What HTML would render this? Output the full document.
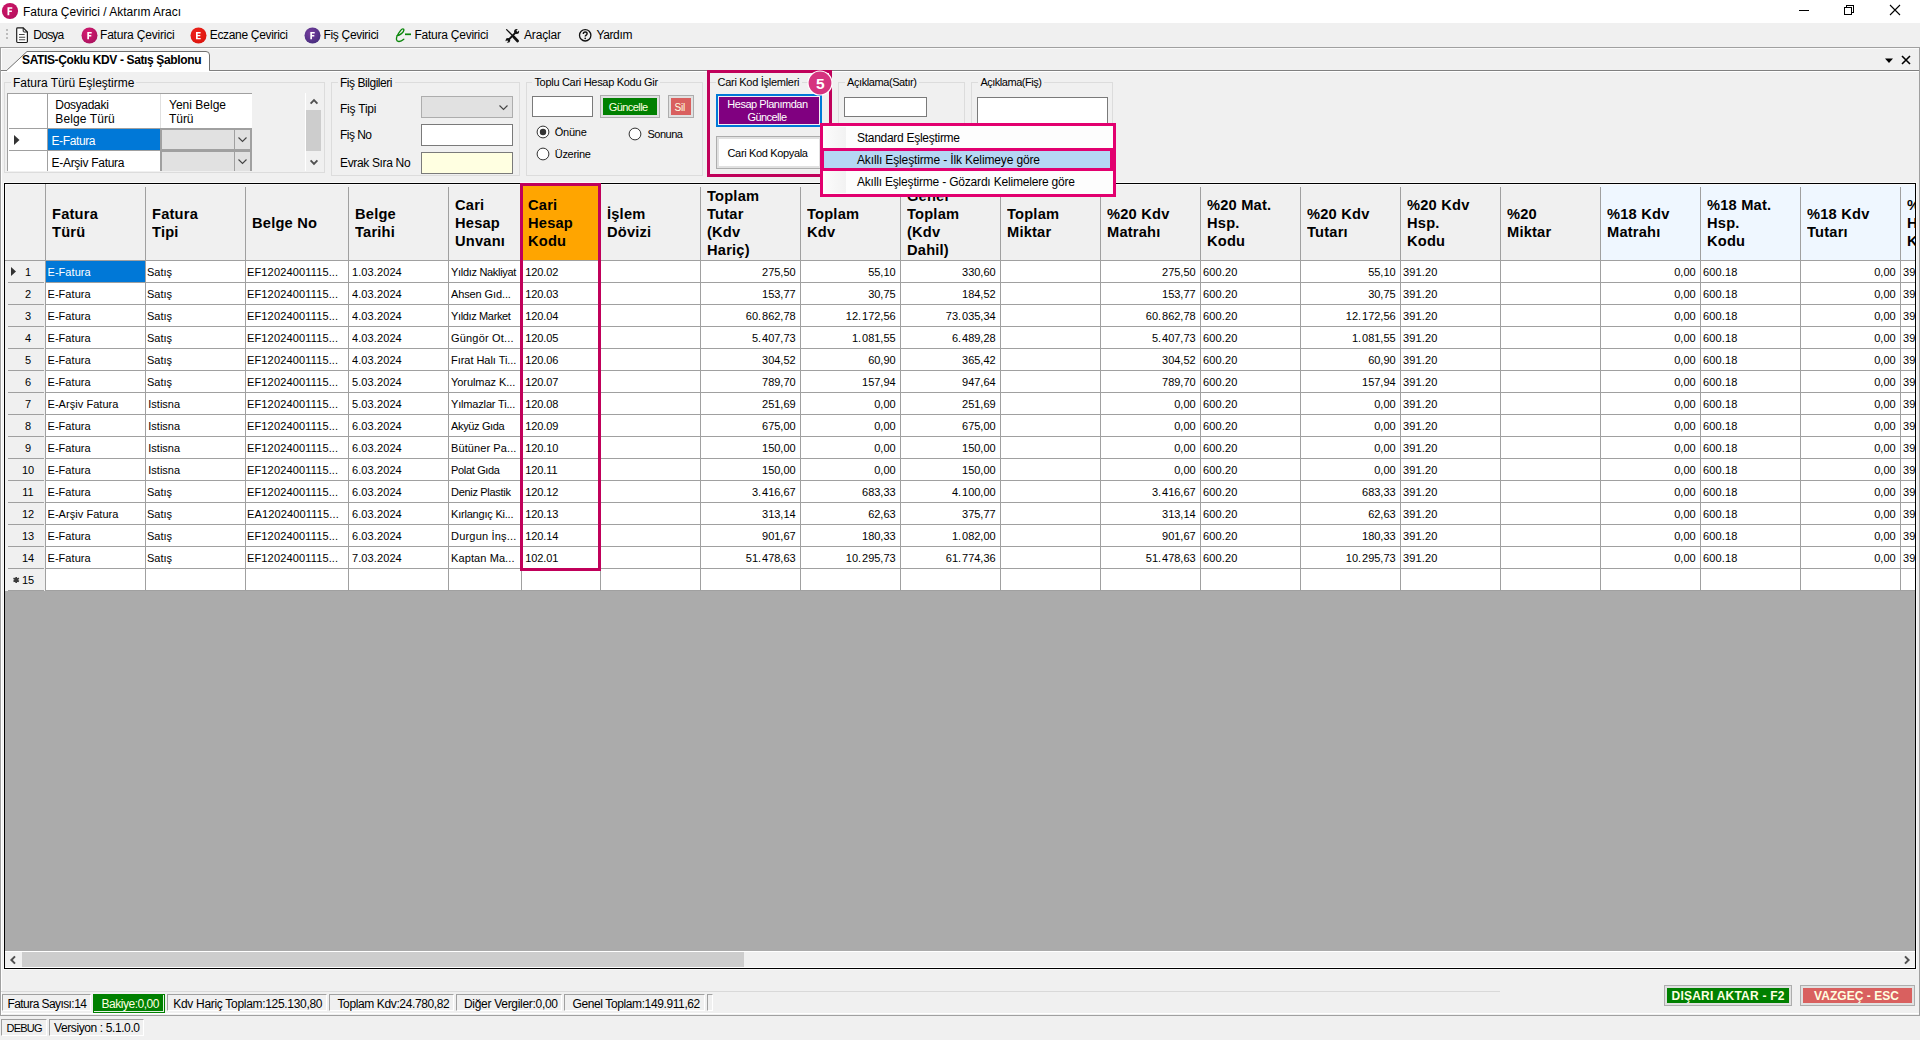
<!DOCTYPE html>
<html><head><meta charset="utf-8"><title>Fatura Çevirici / Aktarım Aracı</title><style>html,body{margin:0;padding:0}
body{width:1920px;height:1040px;overflow:hidden;position:relative;background:#f0f0f0;font-family:"Liberation Sans",sans-serif;font-size:12px}
div,svg,span{position:absolute}
.t{white-space:pre}
.t i{font-style:normal;letter-spacing:.95px}
.hd{font-weight:700;font-size:14.67px;line-height:18px;color:#000;overflow:hidden;white-space:nowrap;letter-spacing:.2px}
.hd div{position:static}
</style></head><body>
<div style="left:0px;top:0px;width:1920px;height:23px;background:#fff;"></div>
<svg style="left:1px;top:2px" width="18" height="18" viewBox="0 0 18 18"><defs><radialGradient id="g1" cx="0.4" cy="0.35" r="0.8"><stop offset="0" stop-color="#cf1568"/><stop offset="1" stop-color="#b00f5c"/></radialGradient></defs><circle cx="9" cy="9" r="8.1" fill="url(#g1)"/><path d="M6.5 5.2h4.8v1.6H8.3v1.6h2.6v1.5H8.3v3.3H6.5z" fill="#fff"/></svg>
<span class="t" style="left:23px;top:4px;font-size:12px;line-height:16px;color:#000;letter-spacing:-0.024px;">Fatura Çevirici / Aktarım Aracı</span>
<svg style="left:1790px;top:0" width="130" height="23" viewBox="0 0 130 23"><g stroke="#000" stroke-width="1" fill="none" shape-rendering="crispEdges"><path d="M9 10.5h10"/><path d="M54.5 7.5h7v7h-7z"/><path d="M56.5 7.5v-2h7v7h-2"/></g><path d="M100 5l10 10M110 5l-10 10" stroke="#000" stroke-width="1.1" fill="none"/></svg>
<div style="left:0px;top:23px;width:1920px;height:24px;background:#f0f0f0;"></div>
<div style="left:6px;top:29px;width:2px;height:2px;background:#bdbdbd;"></div>
<div style="left:6px;top:33px;width:2px;height:2px;background:#bdbdbd;"></div>
<div style="left:6px;top:37px;width:2px;height:2px;background:#bdbdbd;"></div>
<svg style="left:15px;top:26px" width="14" height="18" viewBox="0 0 14 18"><path d="M2.6 1.8h5.6l4.2 4.2v9.6q0 .9-.9.9H2.6q-.9 0-.9-.9V2.7q0-.9.9-.9z" fill="#fff" stroke="#1a1a1a" stroke-width="1.15"/><path d="M8.2 1.8v3.3q0 .9.9.9h3.3" fill="none" stroke="#1a1a1a" stroke-width="1"/><path d="M4 8.5h5.6M4 11.2h6.2M4 13.8h6.2" stroke="#4a4a4a" stroke-width="1.1"/></svg>
<span class="t" style="left:33.3px;top:27px;font-size:12px;line-height:16px;color:#000;letter-spacing:-0.754px;">Dosya</span>
<svg style="left:80.8px;top:26.6px" width="17" height="17" viewBox="0 0 17 17"><defs><radialGradient id="g2" cx="0.4" cy="0.35" r="0.8"><stop offset="0" stop-color="#d81b72"/><stop offset="1" stop-color="#a3125c"/></radialGradient></defs><circle cx="8.5" cy="8.5" r="8" fill="url(#g2)"/><path d="M6.3 5h4.4v1.5H8v1.5h2.3v1.4H8v2.9H6.3z" fill="#fff"/></svg>
<span class="t" style="left:100px;top:27px;font-size:12px;line-height:16px;color:#000;letter-spacing:-0.19px;">Fatura Çevirici</span>
<svg style="left:190.4px;top:26.6px" width="17" height="17" viewBox="0 0 17 17"><defs><radialGradient id="g3" cx="0.4" cy="0.35" r="0.8"><stop offset="0" stop-color="#f0241c"/><stop offset="1" stop-color="#d8120c"/></radialGradient></defs><circle cx="8.5" cy="8.5" r="8" fill="url(#g3)"/><path d="M6 5h4.6v1.4H7.7v1.5h2.6v1.4H7.7v1.6h3v1.4H6z" fill="#fff"/></svg>
<span class="t" style="left:209.7px;top:27px;font-size:12px;line-height:16px;color:#000;letter-spacing:-0.315px;">Eczane Çevirici</span>
<svg style="left:303.6px;top:26.6px" width="17" height="17" viewBox="0 0 17 17"><defs><radialGradient id="g4" cx="0.4" cy="0.35" r="0.8"><stop offset="0" stop-color="#7a3fa0"/><stop offset="1" stop-color="#3d2a78"/></radialGradient></defs><circle cx="8.5" cy="8.5" r="8" fill="url(#g4)"/><path d="M6.3 5h4.4v1.5H8v1.5h2.3v1.4H8v2.9H6.3z" fill="#fff"/></svg>
<span class="t" style="left:323.4px;top:27px;font-size:12px;line-height:16px;color:#000;letter-spacing:-0.297px;">Fiş Çevirici</span>
<svg style="left:395px;top:26px" width="18" height="18" viewBox="0 0 18 18"><path d="M1.8 9.8C5 9 8.6 6.6 8.9 4.2 9 2.5 7.2 2.4 5.7 4.3 3.4 7.2 1 11.2 1.5 13.7c.5 2.6 4 2.3 7.3-.4" fill="none" stroke="#0b870b" stroke-width="1.35" stroke-linecap="round"/><path d="M10 8.3h6" stroke="#0b870b" stroke-width="1.7"/></svg>
<span class="t" style="left:414.4px;top:27px;font-size:12px;line-height:16px;color:#000;letter-spacing:-0.233px;">Fatura Çevirici</span>
<svg style="left:505px;top:28px" width="16" height="16" viewBox="0 0 16 16"><g stroke="#111" stroke-linecap="round" fill="none"><path d="M1.6 1.6L8 8" stroke-width="1.3"/><path d="M8.6 8.8l4 4.2" stroke-width="2.7"/><path d="M3.6 11.8l7.2-7.4" stroke-width="1.9"/></g><circle cx="11.6" cy="3.6" r="2.5" fill="#111"/><path d="M11.9 3.3l3-3" stroke="#f0f0f0" stroke-width="1.7"/><circle cx="2.9" cy="12.4" r="2.3" fill="#111"/><path d="M2.6 12.7l-3 3" stroke="#f0f0f0" stroke-width="1.6"/></svg>
<span class="t" style="left:524px;top:27px;font-size:12px;line-height:16px;color:#000;letter-spacing:-0.169px;">Araçlar</span>
<svg style="left:578px;top:28px" width="15" height="15" viewBox="0 0 15 15"><circle cx="7.2" cy="7.3" r="5.7" fill="none" stroke="#111" stroke-width="1.3"/><path d="M5.3 5.9c0-1.2.8-1.9 1.9-1.9s1.9.7 1.9 1.7c0 1.4-1.9 1.4-1.9 2.9" fill="none" stroke="#111" stroke-width="1.4"/><circle cx="7.2" cy="10.3" r=".85" fill="#111"/></svg>
<span class="t" style="left:596.4px;top:27px;font-size:12px;line-height:16px;color:#000;letter-spacing:-0.359px;">Yardım</span>
<div style="left:0px;top:47px;width:1920px;height:969px;background:#f0f0f0;"></div>
<div style="left:0px;top:47px;width:1920px;height:1px;background:#a0a0a0;"></div>
<div style="left:0px;top:47px;width:1px;height:969px;background:#a0a0a0;"></div>
<div style="left:1919px;top:47px;width:1px;height:969px;background:#a0a0a0;"></div>
<div style="left:0px;top:1015px;width:1920px;height:1px;background:#a0a0a0;"></div>
<div style="left:1px;top:48px;width:1px;height:967px;background:#fff;"></div>
<div style="left:1px;top:48px;width:1918px;height:1px;background:#fafafa;"></div>
<div style="left:1px;top:70px;width:1918px;height:1px;background:#808080;"></div>
<div style="left:1px;top:71px;width:1918px;height:1px;background:#fff;"></div>
<svg style="left:2px;top:50px" width="212" height="22" viewBox="0 0 212 22"><path d="M4.6 20.5 L25 1.5 H204 Q207.5 1.5 207.5 5 V20.5" fill="#fff" stroke="#707070" stroke-width="1"/><path d="M5.2 20.5H207" stroke="#fff" stroke-width="1.4"/></svg>
<span class="t" style="left:22px;top:52px;font-size:12px;line-height:16px;color:#000;font-weight:700;letter-spacing:-0.366px;">SATIS-Çoklu KDV - Satış Şablonu</span>
<svg style="left:1883px;top:54px" width="30" height="12" viewBox="0 0 30 12"><path d="M2 4.5h8l-4 4.5z" fill="#000"/><path d="M19 2l8 8M27 2l-8 8" stroke="#000" stroke-width="1.6"/></svg>
<div style="left:4px;top:82px;width:321px;height:91px;border:1px solid #dcdcdc;box-sizing:border-box;"></div>
<div style="left:11px;top:76px;width:125.4px;height:13px;background:#f0f0f0;"></div>
<span class="t" style="left:13px;top:75px;font-size:12px;line-height:16px;color:#000;letter-spacing:-0.02px;">Fatura Türü Eşleştirme</span>
<div style="left:331px;top:82px;width:189px;height:94px;border:1px solid #dcdcdc;box-sizing:border-box;"></div>
<div style="left:338px;top:76px;width:56.5px;height:13px;background:#f0f0f0;"></div>
<span class="t" style="left:340px;top:75px;font-size:12px;line-height:16px;color:#000;letter-spacing:-0.46px;">Fiş Bilgileri</span>
<div style="left:526px;top:82px;width:177px;height:94px;border:1px solid #dcdcdc;box-sizing:border-box;"></div>
<div style="left:532.4px;top:76px;width:127.7px;height:13px;background:#f0f0f0;"></div>
<span class="t" style="left:534.4px;top:75px;font-size:11px;line-height:14px;color:#000;letter-spacing:-0.298px;">Toplu Cari Hesap Kodu Gir</span>
<div style="left:709px;top:82px;width:123px;height:94px;border:1px solid #dcdcdc;box-sizing:border-box;"></div>
<div style="left:715.5px;top:76px;width:86px;height:13px;background:#f0f0f0;"></div>
<span class="t" style="left:717.5px;top:75px;font-size:11px;line-height:14px;color:#000;letter-spacing:-0.283px;">Cari Kod İşlemleri</span>
<div style="left:838px;top:82px;width:127px;height:94px;border:1px solid #dcdcdc;box-sizing:border-box;"></div>
<div style="left:845px;top:76px;width:74px;height:13px;background:#f0f0f0;"></div>
<span class="t" style="left:847px;top:75px;font-size:11px;line-height:14px;color:#000;letter-spacing:-0.414px;">Açıklama(Satır)</span>
<div style="left:971px;top:82px;width:142px;height:94px;border:1px solid #dcdcdc;box-sizing:border-box;"></div>
<div style="left:978.4px;top:76px;width:65.5px;height:13px;background:#f0f0f0;"></div>
<span class="t" style="left:980.4px;top:75px;font-size:11px;line-height:14px;color:#000;letter-spacing:-0.478px;">Açıklama(Fiş)</span>
<div style="left:7px;top:93px;width:245px;height:78px;background:#fff;"></div>
<div style="left:7px;top:93px;width:245px;height:1px;background:#a0a0a0;"></div>
<div style="left:7px;top:93px;width:1px;height:78px;background:#a0a0a0;"></div>
<div style="left:47px;top:94px;width:1px;height:77px;background:#a0a0a0;"></div>
<div style="left:9px;top:128px;width:243px;height:1px;background:#a0a0a0;"></div>
<div style="left:9px;top:150px;width:243px;height:1px;background:#a0a0a0;"></div>
<div style="left:160px;top:94px;width:1px;height:35px;background:#e0e0e0;"></div>
<span class="t" style="left:55.3px;top:97px;font-size:12px;line-height:16px;color:#000;letter-spacing:-0.316px;">Dosyadaki</span>
<span class="t" style="left:55.3px;top:111px;font-size:12px;line-height:16px;color:#000;letter-spacing:0.113px;">Belge Türü</span>
<span class="t" style="left:169px;top:97px;font-size:12px;line-height:16px;color:#000;letter-spacing:0.005px;">Yeni Belge</span>
<span class="t" style="left:169px;top:111px;font-size:12px;line-height:16px;color:#000;letter-spacing:-0.062px;">Türü</span>
<div style="left:48px;top:129px;width:112px;height:21px;background:#0078d7;"></div>
<span class="t" style="left:51.5px;top:133px;font-size:12px;line-height:16px;color:#fff;letter-spacing:-0.384px;">E-Fatura</span>
<span class="t" style="left:51.5px;top:155px;font-size:12px;line-height:16px;color:#000;letter-spacing:-0.284px;">E-Arşiv Fatura</span>
<svg style="left:13px;top:134px" width="8" height="12" viewBox="0 0 8 12"><path d="M1 1l5.5 5L1 11z" fill="#333"/></svg>
<div style="left:160px;top:128px;width:92px;height:23px;background:#e1e1e1;border:2px solid #a0a0a0;box-sizing:border-box;"></div>
<div style="left:234px;top:130px;width:1px;height:19px;background:#a0a0a0;"></div>
<svg style="left:237px;top:136px" width="11" height="8" viewBox="0 0 11 8"><path d="M1.5 1.5l4 4 4-4" fill="none" stroke="#444" stroke-width="1.1"/></svg>
<div style="left:160px;top:150px;width:92px;height:23px;background:#e1e1e1;border:2px solid #a0a0a0;box-sizing:border-box;"></div>
<div style="left:234px;top:152px;width:1px;height:19px;background:#a0a0a0;"></div>
<svg style="left:237px;top:158px" width="11" height="8" viewBox="0 0 11 8"><path d="M1.5 1.5l4 4 4-4" fill="none" stroke="#444" stroke-width="1.1"/></svg>
<div style="left:6px;top:171px;width:318px;height:5px;background:#f0f0f0;"></div>
<div style="left:5px;top:172px;width:320px;height:1px;background:#dcdcdc;"></div>
<div style="left:305px;top:93px;width:1px;height:78px;background:#fff;"></div>
<div style="left:306px;top:93px;width:16px;height:78px;background:#f0f0f0;"></div>
<div style="left:306px;top:110px;width:15px;height:41px;background:#cdcdcd;"></div>
<svg style="left:309px;top:98px" width="10" height="7" viewBox="0 0 10 7"><path d="M1.6 5.6l3.4-3.4 3.4 3.4" fill="none" stroke="#505050" stroke-width="1.9"/></svg>
<svg style="left:309px;top:159px" width="10" height="7" viewBox="0 0 10 7"><path d="M1.6 1.4l3.4 3.4 3.4-3.4" fill="none" stroke="#505050" stroke-width="1.9"/></svg>
<span class="t" style="left:340px;top:101px;font-size:12px;line-height:16px;color:#000;letter-spacing:-0.217px;">Fiş Tipi</span>
<span class="t" style="left:340px;top:127px;font-size:12px;line-height:16px;color:#000;letter-spacing:-0.534px;">Fiş No</span>
<span class="t" style="left:340px;top:155px;font-size:12px;line-height:16px;color:#000;letter-spacing:-0.342px;">Evrak Sıra No</span>
<div style="left:421px;top:96px;width:92px;height:22px;background:#e1e1e1;border:1px solid #adadad;box-sizing:border-box;"></div>
<svg style="left:498px;top:104px" width="11" height="8" viewBox="0 0 11 8"><path d="M1.5 1.5l4 4 4-4" fill="none" stroke="#444" stroke-width="1.1"/></svg>
<div style="left:421px;top:124px;width:92px;height:22px;background:#fff;border:1px solid #7a7a7a;box-sizing:border-box;"></div>
<div style="left:421px;top:152px;width:92px;height:22px;background:#ffffe1;border:1px solid #7a7a7a;box-sizing:border-box;"></div>
<div style="left:532px;top:96px;width:61px;height:21px;background:#fff;border:1px solid #7a7a7a;box-sizing:border-box;"></div>
<div style="left:600px;top:95px;width:60px;height:23px;background:#e1e1e1;border:1px solid #adadad;box-sizing:border-box;"></div>
<div style="left:603px;top:98px;width:54px;height:17px;background:#008000;"></div>
<span class="t" style="left:608.8px;top:100px;font-size:11px;line-height:14px;color:#ffffe0;letter-spacing:-0.575px;">Güncelle</span>
<div style="left:668px;top:95px;width:26px;height:23px;background:#e1e1e1;border:1px solid #adadad;box-sizing:border-box;"></div>
<div style="left:671px;top:98px;width:20px;height:17px;background:#d9605f;"></div>
<span class="t" style="left:674.4px;top:101px;font-size:10px;line-height:13px;color:#ffffe0;letter-spacing:-0.15px;">Sil</span>
<svg style="left:535.5px;top:124.5px" width="14" height="14" viewBox="0 0 14 14"><circle cx="7" cy="7" r="5.9" fill="#fff" stroke="#333" stroke-width="1"/><circle cx="7" cy="7" r="3.2" fill="#333"/></svg>
<span class="t" style="left:554.8px;top:125px;font-size:11px;line-height:14px;color:#000;letter-spacing:-0.258px;">Önüne</span>
<svg style="left:628.3px;top:126.5px" width="14" height="14" viewBox="0 0 14 14"><circle cx="7" cy="7" r="5.9" fill="#fff" stroke="#333" stroke-width="1"/></svg>
<span class="t" style="left:647.5px;top:127px;font-size:11px;line-height:14px;color:#000;letter-spacing:-0.487px;">Sonuna</span>
<svg style="left:535.5px;top:146.5px" width="14" height="14" viewBox="0 0 14 14"><circle cx="7" cy="7" r="5.9" fill="#fff" stroke="#333" stroke-width="1"/></svg>
<span class="t" style="left:554.8px;top:147px;font-size:11px;line-height:14px;color:#000;letter-spacing:-0.318px;">Üzerine</span>
<div style="left:716px;top:94px;width:106px;height:33px;background:#0078d7;"></div>
<div style="left:718px;top:96px;width:102px;height:29px;background:#f6f0f4;"></div>
<div style="left:719px;top:97px;width:100px;height:27px;background:#800080;"></div>
<span class="t" style="left:727.3px;top:97px;font-size:11px;line-height:14px;color:#fff;letter-spacing:-0.475px;">Hesap Planımdan</span>
<span class="t" style="left:747.5px;top:110px;font-size:11px;line-height:14px;color:#fff;letter-spacing:-0.56px;">Güncelle</span>
<div style="left:716px;top:136px;width:106px;height:33px;background:#e1e1e1;border:1px solid #adadad;box-sizing:border-box;"></div>
<div style="left:719px;top:139px;width:100px;height:27px;background:#fff;"></div>
<span class="t" style="left:727.5px;top:146px;font-size:11px;line-height:14px;color:#000;letter-spacing:-0.341px;">Cari Kod Kopyala</span>
<div style="left:844px;top:97px;width:83px;height:20px;background:#fff;border:1px solid #7a7a7a;box-sizing:border-box;"></div>
<div style="left:977px;top:97px;width:131px;height:40px;background:#fff;border:1px solid #7a7a7a;box-sizing:border-box;"></div>
<div style="left:707px;top:70px;width:125px;height:107px;border:3px solid #c0005a;box-sizing:border-box;"></div>
<svg style="left:806.3px;top:68.5px" width="28" height="28" viewBox="0 0 28 28"><circle cx="14" cy="14" r="12" fill="#d6337f" stroke="#fff" stroke-width="1.2"/><text x="14.3" y="19.5" text-anchor="middle" font-family="Liberation Sans" font-weight="700" font-size="15.5" fill="#fff">5</text></svg>
<div style="left:3px;top:182px;width:1914px;height:788px;background:#fafafa;"></div>
<div style="left:4px;top:183px;width:1912px;height:786px;background:#ababab;border:1px solid #000;box-sizing:border-box;"></div>
<div style="left:5px;top:184px;width:1910px;height:76px;background:#f0f0f0;"></div>
<div style="left:1600px;top:184px;width:315px;height:76px;background:#eff7ff;"></div>
<div style="left:5px;top:260px;width:1910px;height:1px;background:#a0a0a0;"></div>
<div style="left:5px;top:184px;width:1910px;height:1px;background:#f9f9f9;"></div>
<div style="left:5px;top:184px;width:1px;height:76px;background:#f9f9f9;"></div>
<div style="left:5px;top:261px;width:41px;height:330px;background:#f0f0f0;"></div>
<div style="left:46px;top:261px;width:1869px;height:330px;background:#fff;"></div>
<div style="left:8px;top:282px;width:36px;height:1px;background:#a0a0a0;"></div>
<div style="left:46px;top:282px;width:1869px;height:1px;background:#a0a0a0;"></div>
<div style="left:8px;top:304px;width:36px;height:1px;background:#a0a0a0;"></div>
<div style="left:46px;top:304px;width:1869px;height:1px;background:#a0a0a0;"></div>
<div style="left:8px;top:326px;width:36px;height:1px;background:#a0a0a0;"></div>
<div style="left:46px;top:326px;width:1869px;height:1px;background:#a0a0a0;"></div>
<div style="left:8px;top:348px;width:36px;height:1px;background:#a0a0a0;"></div>
<div style="left:46px;top:348px;width:1869px;height:1px;background:#a0a0a0;"></div>
<div style="left:8px;top:370px;width:36px;height:1px;background:#a0a0a0;"></div>
<div style="left:46px;top:370px;width:1869px;height:1px;background:#a0a0a0;"></div>
<div style="left:8px;top:392px;width:36px;height:1px;background:#a0a0a0;"></div>
<div style="left:46px;top:392px;width:1869px;height:1px;background:#a0a0a0;"></div>
<div style="left:8px;top:414px;width:36px;height:1px;background:#a0a0a0;"></div>
<div style="left:46px;top:414px;width:1869px;height:1px;background:#a0a0a0;"></div>
<div style="left:8px;top:436px;width:36px;height:1px;background:#a0a0a0;"></div>
<div style="left:46px;top:436px;width:1869px;height:1px;background:#a0a0a0;"></div>
<div style="left:8px;top:458px;width:36px;height:1px;background:#a0a0a0;"></div>
<div style="left:46px;top:458px;width:1869px;height:1px;background:#a0a0a0;"></div>
<div style="left:8px;top:480px;width:36px;height:1px;background:#a0a0a0;"></div>
<div style="left:46px;top:480px;width:1869px;height:1px;background:#a0a0a0;"></div>
<div style="left:8px;top:502px;width:36px;height:1px;background:#a0a0a0;"></div>
<div style="left:46px;top:502px;width:1869px;height:1px;background:#a0a0a0;"></div>
<div style="left:8px;top:524px;width:36px;height:1px;background:#a0a0a0;"></div>
<div style="left:46px;top:524px;width:1869px;height:1px;background:#a0a0a0;"></div>
<div style="left:8px;top:546px;width:36px;height:1px;background:#a0a0a0;"></div>
<div style="left:46px;top:546px;width:1869px;height:1px;background:#a0a0a0;"></div>
<div style="left:8px;top:568px;width:36px;height:1px;background:#a0a0a0;"></div>
<div style="left:46px;top:568px;width:1869px;height:1px;background:#a0a0a0;"></div>
<div style="left:8px;top:590px;width:36px;height:1px;background:#a0a0a0;"></div>
<div style="left:46px;top:590px;width:1869px;height:1px;background:#a0a0a0;"></div>
<div style="left:45px;top:184px;width:1px;height:407px;background:#a0a0a0;"></div>
<div style="left:145px;top:187px;width:1px;height:404px;background:#a0a0a0;"></div>
<div style="left:245px;top:187px;width:1px;height:404px;background:#a0a0a0;"></div>
<div style="left:348px;top:187px;width:1px;height:404px;background:#a0a0a0;"></div>
<div style="left:448px;top:187px;width:1px;height:404px;background:#a0a0a0;"></div>
<div style="left:521px;top:187px;width:1px;height:404px;background:#a0a0a0;"></div>
<div style="left:600px;top:187px;width:1px;height:404px;background:#a0a0a0;"></div>
<div style="left:700px;top:187px;width:1px;height:404px;background:#a0a0a0;"></div>
<div style="left:800px;top:187px;width:1px;height:404px;background:#a0a0a0;"></div>
<div style="left:900px;top:187px;width:1px;height:404px;background:#a0a0a0;"></div>
<div style="left:1000px;top:187px;width:1px;height:404px;background:#a0a0a0;"></div>
<div style="left:1100px;top:187px;width:1px;height:404px;background:#a0a0a0;"></div>
<div style="left:1200px;top:187px;width:1px;height:404px;background:#a0a0a0;"></div>
<div style="left:1300px;top:187px;width:1px;height:404px;background:#a0a0a0;"></div>
<div style="left:1400px;top:187px;width:1px;height:404px;background:#a0a0a0;"></div>
<div style="left:1500px;top:187px;width:1px;height:404px;background:#a0a0a0;"></div>
<div style="left:1600px;top:187px;width:1px;height:404px;background:#a0a0a0;"></div>
<div style="left:1700px;top:187px;width:1px;height:404px;background:#a0a0a0;"></div>
<div style="left:1800px;top:187px;width:1px;height:404px;background:#a0a0a0;"></div>
<div style="left:1900px;top:187px;width:1px;height:404px;background:#a0a0a0;"></div>
<div style="left:522px;top:184px;width:78px;height:76px;background:#ffa500;"></div>
<div class="hd" style="left:52px;top:205px;width:93px;"><div>Fatura</div><div>Türü</div></div>
<div class="hd" style="left:152px;top:205px;width:93px;"><div>Fatura</div><div>Tipi</div></div>
<div class="hd" style="left:252px;top:214px;width:96px;"><div>Belge No</div></div>
<div class="hd" style="left:355px;top:205px;width:93px;"><div>Belge</div><div>Tarihi</div></div>
<div class="hd" style="left:455px;top:196px;width:66px;"><div>Cari</div><div>Hesap</div><div>Unvanı</div></div>
<div class="hd" style="left:528px;top:196px;width:72px;"><div>Cari</div><div>Hesap</div><div>Kodu</div></div>
<div class="hd" style="left:607px;top:205px;width:93px;"><div>İşlem</div><div>Dövizi</div></div>
<div class="hd" style="left:707px;top:187px;width:93px;"><div>Toplam</div><div>Tutar</div><div>(Kdv</div><div>Hariç)</div></div>
<div class="hd" style="left:807px;top:205px;width:93px;"><div>Toplam</div><div>Kdv</div></div>
<div class="hd" style="left:907px;top:187px;width:93px;"><div>Genel</div><div>Toplam</div><div>(Kdv</div><div>Dahil)</div></div>
<div class="hd" style="left:1007px;top:205px;width:93px;"><div>Toplam</div><div>Miktar</div></div>
<div class="hd" style="left:1107px;top:205px;width:93px;"><div>%20 Kdv</div><div>Matrahı</div></div>
<div class="hd" style="left:1207px;top:196px;width:93px;"><div>%20 Mat.</div><div>Hsp.</div><div>Kodu</div></div>
<div class="hd" style="left:1307px;top:205px;width:93px;"><div>%20 Kdv</div><div>Tutarı</div></div>
<div class="hd" style="left:1407px;top:196px;width:93px;"><div>%20 Kdv</div><div>Hsp.</div><div>Kodu</div></div>
<div class="hd" style="left:1507px;top:205px;width:93px;"><div>%20</div><div>Miktar</div></div>
<div class="hd" style="left:1607px;top:205px;width:93px;"><div>%18 Kdv</div><div>Matrahı</div></div>
<div class="hd" style="left:1707px;top:196px;width:93px;"><div>%18 Mat.</div><div>Hsp.</div><div>Kodu</div></div>
<div class="hd" style="left:1807px;top:205px;width:93px;"><div>%18 Kdv</div><div>Tutarı</div></div>
<div class="hd" style="left:1907px;top:196px;width:8px;"><div>%</div><div>H</div><div>K</div></div>
<div style="left:46px;top:261px;width:99px;height:21px;background:#0078d7;"></div>
<svg style="left:10px;top:266px" width="7" height="11" viewBox="0 0 7 11"><path d="M1 1l5 4.5L1 10z" fill="#333"/></svg>
<span class="t" style="left:13px;top:265px;font-size:11px;line-height:14px;color:#000;width:30px;text-align:center;">1</span>
<span class="t" style="left:47.5px;top:265px;font-size:11px;line-height:14px;color:#fff;letter-spacing:0.05px;width:97.5px;overflow:hidden;">E-Fatura</span>
<span class="t" style="left:147px;top:265px;font-size:11px;line-height:14px;color:#000;width:98px;overflow:hidden;">Satış</span>
<span class="t" style="left:247px;top:265px;font-size:11px;line-height:14px;color:#000;letter-spacing:0.15px;width:101px;overflow:hidden;">EF12024001115...</span>
<span class="t" style="left:352px;top:265px;font-size:11px;line-height:14px;color:#000;letter-spacing:0.1px;width:96px;overflow:hidden;">1.03.2024</span>
<span class="t" style="left:451px;top:265px;font-size:11px;line-height:14px;color:#000;letter-spacing:-0.307px;width:70px;overflow:hidden;">Yıldız Nakliyat</span>
<span class="t" style="left:525.3px;top:265px;font-size:11px;line-height:14px;color:#000;letter-spacing:-0.12px;width:74.7px;overflow:hidden;">120.02</span>
<span class="t" style="right:1124.4px;top:265px;font-size:11px;line-height:14px;color:#000;letter-spacing:-0.02px;">275,50</span>
<span class="t" style="right:1024.4px;top:265px;font-size:11px;line-height:14px;color:#000;letter-spacing:-0.02px;">55,10</span>
<span class="t" style="right:924.4px;top:265px;font-size:11px;line-height:14px;color:#000;letter-spacing:-0.02px;">330,60</span>
<span class="t" style="right:724.4000000000001px;top:265px;font-size:11px;line-height:14px;color:#000;letter-spacing:-0.02px;">275,50</span>
<span class="t" style="left:1203px;top:265px;font-size:11px;line-height:14px;color:#000;letter-spacing:0.15px;width:97px;overflow:hidden;">600.20</span>
<span class="t" style="right:524.4000000000001px;top:265px;font-size:11px;line-height:14px;color:#000;letter-spacing:-0.02px;">55,10</span>
<span class="t" style="left:1403px;top:265px;font-size:11px;line-height:14px;color:#000;letter-spacing:0.15px;width:97px;overflow:hidden;">391.20</span>
<span class="t" style="right:224.4000000000001px;top:265px;font-size:11px;line-height:14px;color:#000;letter-spacing:-0.02px;">0,00</span>
<span class="t" style="left:1703px;top:265px;font-size:11px;line-height:14px;color:#000;letter-spacing:0.15px;width:97px;overflow:hidden;">600.18</span>
<span class="t" style="right:24.40000000000009px;top:265px;font-size:11px;line-height:14px;color:#000;letter-spacing:-0.02px;">0,00</span>
<span class="t" style="left:1903px;top:265px;font-size:11px;line-height:14px;color:#000;letter-spacing:0.15px;width:12px;overflow:hidden;">39</span>
<span class="t" style="left:13px;top:287px;font-size:11px;line-height:14px;color:#000;width:30px;text-align:center;">2</span>
<span class="t" style="left:47.5px;top:287px;font-size:11px;line-height:14px;color:#000;letter-spacing:0.05px;width:97.5px;overflow:hidden;">E-Fatura</span>
<span class="t" style="left:147px;top:287px;font-size:11px;line-height:14px;color:#000;width:98px;overflow:hidden;">Satış</span>
<span class="t" style="left:247px;top:287px;font-size:11px;line-height:14px;color:#000;letter-spacing:0.15px;width:101px;overflow:hidden;">EF12024001115...</span>
<span class="t" style="left:352px;top:287px;font-size:11px;line-height:14px;color:#000;letter-spacing:0.1px;width:96px;overflow:hidden;">4.03.2024</span>
<span class="t" style="left:451px;top:287px;font-size:11px;line-height:14px;color:#000;letter-spacing:-0.114px;width:70px;overflow:hidden;">Ahsen Gıd...</span>
<span class="t" style="left:525.3px;top:287px;font-size:11px;line-height:14px;color:#000;letter-spacing:-0.12px;width:74.7px;overflow:hidden;">120.03</span>
<span class="t" style="right:1124.4px;top:287px;font-size:11px;line-height:14px;color:#000;letter-spacing:-0.02px;">153,77</span>
<span class="t" style="right:1024.4px;top:287px;font-size:11px;line-height:14px;color:#000;letter-spacing:-0.02px;">30,75</span>
<span class="t" style="right:924.4px;top:287px;font-size:11px;line-height:14px;color:#000;letter-spacing:-0.02px;">184,52</span>
<span class="t" style="right:724.4000000000001px;top:287px;font-size:11px;line-height:14px;color:#000;letter-spacing:-0.02px;">153,77</span>
<span class="t" style="left:1203px;top:287px;font-size:11px;line-height:14px;color:#000;letter-spacing:0.15px;width:97px;overflow:hidden;">600.20</span>
<span class="t" style="right:524.4000000000001px;top:287px;font-size:11px;line-height:14px;color:#000;letter-spacing:-0.02px;">30,75</span>
<span class="t" style="left:1403px;top:287px;font-size:11px;line-height:14px;color:#000;letter-spacing:0.15px;width:97px;overflow:hidden;">391.20</span>
<span class="t" style="right:224.4000000000001px;top:287px;font-size:11px;line-height:14px;color:#000;letter-spacing:-0.02px;">0,00</span>
<span class="t" style="left:1703px;top:287px;font-size:11px;line-height:14px;color:#000;letter-spacing:0.15px;width:97px;overflow:hidden;">600.18</span>
<span class="t" style="right:24.40000000000009px;top:287px;font-size:11px;line-height:14px;color:#000;letter-spacing:-0.02px;">0,00</span>
<span class="t" style="left:1903px;top:287px;font-size:11px;line-height:14px;color:#000;letter-spacing:0.15px;width:12px;overflow:hidden;">39</span>
<span class="t" style="left:13px;top:309px;font-size:11px;line-height:14px;color:#000;width:30px;text-align:center;">3</span>
<span class="t" style="left:47.5px;top:309px;font-size:11px;line-height:14px;color:#000;letter-spacing:0.05px;width:97.5px;overflow:hidden;">E-Fatura</span>
<span class="t" style="left:147px;top:309px;font-size:11px;line-height:14px;color:#000;width:98px;overflow:hidden;">Satış</span>
<span class="t" style="left:247px;top:309px;font-size:11px;line-height:14px;color:#000;letter-spacing:0.15px;width:101px;overflow:hidden;">EF12024001115...</span>
<span class="t" style="left:352px;top:309px;font-size:11px;line-height:14px;color:#000;letter-spacing:0.1px;width:96px;overflow:hidden;">4.03.2024</span>
<span class="t" style="left:451px;top:309px;font-size:11px;line-height:14px;color:#000;letter-spacing:-0.357px;width:70px;overflow:hidden;">Yıldız Market</span>
<span class="t" style="left:525.3px;top:309px;font-size:11px;line-height:14px;color:#000;letter-spacing:-0.12px;width:74.7px;overflow:hidden;">120.04</span>
<span class="t" style="right:1124.4px;top:309px;font-size:11px;line-height:14px;color:#000;letter-spacing:-0.02px;">60<i>.</i>862,78</span>
<span class="t" style="right:1024.4px;top:309px;font-size:11px;line-height:14px;color:#000;letter-spacing:-0.02px;">12<i>.</i>172,56</span>
<span class="t" style="right:924.4px;top:309px;font-size:11px;line-height:14px;color:#000;letter-spacing:-0.02px;">73<i>.</i>035,34</span>
<span class="t" style="right:724.4000000000001px;top:309px;font-size:11px;line-height:14px;color:#000;letter-spacing:-0.02px;">60<i>.</i>862,78</span>
<span class="t" style="left:1203px;top:309px;font-size:11px;line-height:14px;color:#000;letter-spacing:0.15px;width:97px;overflow:hidden;">600.20</span>
<span class="t" style="right:524.4000000000001px;top:309px;font-size:11px;line-height:14px;color:#000;letter-spacing:-0.02px;">12<i>.</i>172,56</span>
<span class="t" style="left:1403px;top:309px;font-size:11px;line-height:14px;color:#000;letter-spacing:0.15px;width:97px;overflow:hidden;">391.20</span>
<span class="t" style="right:224.4000000000001px;top:309px;font-size:11px;line-height:14px;color:#000;letter-spacing:-0.02px;">0,00</span>
<span class="t" style="left:1703px;top:309px;font-size:11px;line-height:14px;color:#000;letter-spacing:0.15px;width:97px;overflow:hidden;">600.18</span>
<span class="t" style="right:24.40000000000009px;top:309px;font-size:11px;line-height:14px;color:#000;letter-spacing:-0.02px;">0,00</span>
<span class="t" style="left:1903px;top:309px;font-size:11px;line-height:14px;color:#000;letter-spacing:0.15px;width:12px;overflow:hidden;">39</span>
<span class="t" style="left:13px;top:331px;font-size:11px;line-height:14px;color:#000;width:30px;text-align:center;">4</span>
<span class="t" style="left:47.5px;top:331px;font-size:11px;line-height:14px;color:#000;letter-spacing:0.05px;width:97.5px;overflow:hidden;">E-Fatura</span>
<span class="t" style="left:147px;top:331px;font-size:11px;line-height:14px;color:#000;width:98px;overflow:hidden;">Satış</span>
<span class="t" style="left:247px;top:331px;font-size:11px;line-height:14px;color:#000;letter-spacing:0.15px;width:101px;overflow:hidden;">EF12024001115...</span>
<span class="t" style="left:352px;top:331px;font-size:11px;line-height:14px;color:#000;letter-spacing:0.1px;width:96px;overflow:hidden;">4.03.2024</span>
<span class="t" style="left:451px;top:331px;font-size:11px;line-height:14px;color:#000;letter-spacing:0.179px;width:70px;overflow:hidden;">Güngör Ot...</span>
<span class="t" style="left:525.3px;top:331px;font-size:11px;line-height:14px;color:#000;letter-spacing:-0.12px;width:74.7px;overflow:hidden;">120.05</span>
<span class="t" style="right:1124.4px;top:331px;font-size:11px;line-height:14px;color:#000;letter-spacing:-0.02px;">5<i>.</i>407,73</span>
<span class="t" style="right:1024.4px;top:331px;font-size:11px;line-height:14px;color:#000;letter-spacing:-0.02px;">1<i>.</i>081,55</span>
<span class="t" style="right:924.4px;top:331px;font-size:11px;line-height:14px;color:#000;letter-spacing:-0.02px;">6<i>.</i>489,28</span>
<span class="t" style="right:724.4000000000001px;top:331px;font-size:11px;line-height:14px;color:#000;letter-spacing:-0.02px;">5<i>.</i>407,73</span>
<span class="t" style="left:1203px;top:331px;font-size:11px;line-height:14px;color:#000;letter-spacing:0.15px;width:97px;overflow:hidden;">600.20</span>
<span class="t" style="right:524.4000000000001px;top:331px;font-size:11px;line-height:14px;color:#000;letter-spacing:-0.02px;">1<i>.</i>081,55</span>
<span class="t" style="left:1403px;top:331px;font-size:11px;line-height:14px;color:#000;letter-spacing:0.15px;width:97px;overflow:hidden;">391.20</span>
<span class="t" style="right:224.4000000000001px;top:331px;font-size:11px;line-height:14px;color:#000;letter-spacing:-0.02px;">0,00</span>
<span class="t" style="left:1703px;top:331px;font-size:11px;line-height:14px;color:#000;letter-spacing:0.15px;width:97px;overflow:hidden;">600.18</span>
<span class="t" style="right:24.40000000000009px;top:331px;font-size:11px;line-height:14px;color:#000;letter-spacing:-0.02px;">0,00</span>
<span class="t" style="left:1903px;top:331px;font-size:11px;line-height:14px;color:#000;letter-spacing:0.15px;width:12px;overflow:hidden;">39</span>
<span class="t" style="left:13px;top:353px;font-size:11px;line-height:14px;color:#000;width:30px;text-align:center;">5</span>
<span class="t" style="left:47.5px;top:353px;font-size:11px;line-height:14px;color:#000;letter-spacing:0.05px;width:97.5px;overflow:hidden;">E-Fatura</span>
<span class="t" style="left:147px;top:353px;font-size:11px;line-height:14px;color:#000;width:98px;overflow:hidden;">Satış</span>
<span class="t" style="left:247px;top:353px;font-size:11px;line-height:14px;color:#000;letter-spacing:0.15px;width:101px;overflow:hidden;">EF12024001115...</span>
<span class="t" style="left:352px;top:353px;font-size:11px;line-height:14px;color:#000;letter-spacing:0.1px;width:96px;overflow:hidden;">4.03.2024</span>
<span class="t" style="left:451px;top:353px;font-size:11px;line-height:14px;color:#000;letter-spacing:-0.041px;width:70px;overflow:hidden;">Fırat Halı Ti...</span>
<span class="t" style="left:525.3px;top:353px;font-size:11px;line-height:14px;color:#000;letter-spacing:-0.12px;width:74.7px;overflow:hidden;">120.06</span>
<span class="t" style="right:1124.4px;top:353px;font-size:11px;line-height:14px;color:#000;letter-spacing:-0.02px;">304,52</span>
<span class="t" style="right:1024.4px;top:353px;font-size:11px;line-height:14px;color:#000;letter-spacing:-0.02px;">60,90</span>
<span class="t" style="right:924.4px;top:353px;font-size:11px;line-height:14px;color:#000;letter-spacing:-0.02px;">365,42</span>
<span class="t" style="right:724.4000000000001px;top:353px;font-size:11px;line-height:14px;color:#000;letter-spacing:-0.02px;">304,52</span>
<span class="t" style="left:1203px;top:353px;font-size:11px;line-height:14px;color:#000;letter-spacing:0.15px;width:97px;overflow:hidden;">600.20</span>
<span class="t" style="right:524.4000000000001px;top:353px;font-size:11px;line-height:14px;color:#000;letter-spacing:-0.02px;">60,90</span>
<span class="t" style="left:1403px;top:353px;font-size:11px;line-height:14px;color:#000;letter-spacing:0.15px;width:97px;overflow:hidden;">391.20</span>
<span class="t" style="right:224.4000000000001px;top:353px;font-size:11px;line-height:14px;color:#000;letter-spacing:-0.02px;">0,00</span>
<span class="t" style="left:1703px;top:353px;font-size:11px;line-height:14px;color:#000;letter-spacing:0.15px;width:97px;overflow:hidden;">600.18</span>
<span class="t" style="right:24.40000000000009px;top:353px;font-size:11px;line-height:14px;color:#000;letter-spacing:-0.02px;">0,00</span>
<span class="t" style="left:1903px;top:353px;font-size:11px;line-height:14px;color:#000;letter-spacing:0.15px;width:12px;overflow:hidden;">39</span>
<span class="t" style="left:13px;top:375px;font-size:11px;line-height:14px;color:#000;width:30px;text-align:center;">6</span>
<span class="t" style="left:47.5px;top:375px;font-size:11px;line-height:14px;color:#000;letter-spacing:0.05px;width:97.5px;overflow:hidden;">E-Fatura</span>
<span class="t" style="left:147px;top:375px;font-size:11px;line-height:14px;color:#000;width:98px;overflow:hidden;">Satış</span>
<span class="t" style="left:247px;top:375px;font-size:11px;line-height:14px;color:#000;letter-spacing:0.15px;width:101px;overflow:hidden;">EF12024001115...</span>
<span class="t" style="left:352px;top:375px;font-size:11px;line-height:14px;color:#000;letter-spacing:0.1px;width:96px;overflow:hidden;">5.03.2024</span>
<span class="t" style="left:451px;top:375px;font-size:11px;line-height:14px;color:#000;letter-spacing:-0.06px;width:70px;overflow:hidden;">Yorulmaz K...</span>
<span class="t" style="left:525.3px;top:375px;font-size:11px;line-height:14px;color:#000;letter-spacing:-0.12px;width:74.7px;overflow:hidden;">120.07</span>
<span class="t" style="right:1124.4px;top:375px;font-size:11px;line-height:14px;color:#000;letter-spacing:-0.02px;">789,70</span>
<span class="t" style="right:1024.4px;top:375px;font-size:11px;line-height:14px;color:#000;letter-spacing:-0.02px;">157,94</span>
<span class="t" style="right:924.4px;top:375px;font-size:11px;line-height:14px;color:#000;letter-spacing:-0.02px;">947,64</span>
<span class="t" style="right:724.4000000000001px;top:375px;font-size:11px;line-height:14px;color:#000;letter-spacing:-0.02px;">789,70</span>
<span class="t" style="left:1203px;top:375px;font-size:11px;line-height:14px;color:#000;letter-spacing:0.15px;width:97px;overflow:hidden;">600.20</span>
<span class="t" style="right:524.4000000000001px;top:375px;font-size:11px;line-height:14px;color:#000;letter-spacing:-0.02px;">157,94</span>
<span class="t" style="left:1403px;top:375px;font-size:11px;line-height:14px;color:#000;letter-spacing:0.15px;width:97px;overflow:hidden;">391.20</span>
<span class="t" style="right:224.4000000000001px;top:375px;font-size:11px;line-height:14px;color:#000;letter-spacing:-0.02px;">0,00</span>
<span class="t" style="left:1703px;top:375px;font-size:11px;line-height:14px;color:#000;letter-spacing:0.15px;width:97px;overflow:hidden;">600.18</span>
<span class="t" style="right:24.40000000000009px;top:375px;font-size:11px;line-height:14px;color:#000;letter-spacing:-0.02px;">0,00</span>
<span class="t" style="left:1903px;top:375px;font-size:11px;line-height:14px;color:#000;letter-spacing:0.15px;width:12px;overflow:hidden;">39</span>
<span class="t" style="left:13px;top:397px;font-size:11px;line-height:14px;color:#000;width:30px;text-align:center;">7</span>
<span class="t" style="left:47.5px;top:397px;font-size:11px;line-height:14px;color:#000;letter-spacing:0.05px;width:97.5px;overflow:hidden;">E-Arşiv Fatura</span>
<span class="t" style="left:148.3px;top:397px;font-size:11px;line-height:14px;color:#000;width:96.7px;overflow:hidden;">Istisna</span>
<span class="t" style="left:247px;top:397px;font-size:11px;line-height:14px;color:#000;letter-spacing:0.15px;width:101px;overflow:hidden;">EF12024001115...</span>
<span class="t" style="left:352px;top:397px;font-size:11px;line-height:14px;color:#000;letter-spacing:0.1px;width:96px;overflow:hidden;">5.03.2024</span>
<span class="t" style="left:451px;top:397px;font-size:11px;line-height:14px;color:#000;letter-spacing:-0.166px;width:70px;overflow:hidden;">Yılmazlar Ti...</span>
<span class="t" style="left:525.3px;top:397px;font-size:11px;line-height:14px;color:#000;letter-spacing:-0.12px;width:74.7px;overflow:hidden;">120.08</span>
<span class="t" style="right:1124.4px;top:397px;font-size:11px;line-height:14px;color:#000;letter-spacing:-0.02px;">251,69</span>
<span class="t" style="right:1024.4px;top:397px;font-size:11px;line-height:14px;color:#000;letter-spacing:-0.02px;">0,00</span>
<span class="t" style="right:924.4px;top:397px;font-size:11px;line-height:14px;color:#000;letter-spacing:-0.02px;">251,69</span>
<span class="t" style="right:724.4000000000001px;top:397px;font-size:11px;line-height:14px;color:#000;letter-spacing:-0.02px;">0,00</span>
<span class="t" style="left:1203px;top:397px;font-size:11px;line-height:14px;color:#000;letter-spacing:0.15px;width:97px;overflow:hidden;">600.20</span>
<span class="t" style="right:524.4000000000001px;top:397px;font-size:11px;line-height:14px;color:#000;letter-spacing:-0.02px;">0,00</span>
<span class="t" style="left:1403px;top:397px;font-size:11px;line-height:14px;color:#000;letter-spacing:0.15px;width:97px;overflow:hidden;">391.20</span>
<span class="t" style="right:224.4000000000001px;top:397px;font-size:11px;line-height:14px;color:#000;letter-spacing:-0.02px;">0,00</span>
<span class="t" style="left:1703px;top:397px;font-size:11px;line-height:14px;color:#000;letter-spacing:0.15px;width:97px;overflow:hidden;">600.18</span>
<span class="t" style="right:24.40000000000009px;top:397px;font-size:11px;line-height:14px;color:#000;letter-spacing:-0.02px;">0,00</span>
<span class="t" style="left:1903px;top:397px;font-size:11px;line-height:14px;color:#000;letter-spacing:0.15px;width:12px;overflow:hidden;">39</span>
<span class="t" style="left:13px;top:419px;font-size:11px;line-height:14px;color:#000;width:30px;text-align:center;">8</span>
<span class="t" style="left:47.5px;top:419px;font-size:11px;line-height:14px;color:#000;letter-spacing:0.05px;width:97.5px;overflow:hidden;">E-Fatura</span>
<span class="t" style="left:148.3px;top:419px;font-size:11px;line-height:14px;color:#000;width:96.7px;overflow:hidden;">Istisna</span>
<span class="t" style="left:247px;top:419px;font-size:11px;line-height:14px;color:#000;letter-spacing:0.15px;width:101px;overflow:hidden;">EF12024001115...</span>
<span class="t" style="left:352px;top:419px;font-size:11px;line-height:14px;color:#000;letter-spacing:0.1px;width:96px;overflow:hidden;">6.03.2024</span>
<span class="t" style="left:451px;top:419px;font-size:11px;line-height:14px;color:#000;letter-spacing:-0.351px;width:70px;overflow:hidden;">Akyüz Gıda</span>
<span class="t" style="left:525.3px;top:419px;font-size:11px;line-height:14px;color:#000;letter-spacing:-0.12px;width:74.7px;overflow:hidden;">120.09</span>
<span class="t" style="right:1124.4px;top:419px;font-size:11px;line-height:14px;color:#000;letter-spacing:-0.02px;">675,00</span>
<span class="t" style="right:1024.4px;top:419px;font-size:11px;line-height:14px;color:#000;letter-spacing:-0.02px;">0,00</span>
<span class="t" style="right:924.4px;top:419px;font-size:11px;line-height:14px;color:#000;letter-spacing:-0.02px;">675,00</span>
<span class="t" style="right:724.4000000000001px;top:419px;font-size:11px;line-height:14px;color:#000;letter-spacing:-0.02px;">0,00</span>
<span class="t" style="left:1203px;top:419px;font-size:11px;line-height:14px;color:#000;letter-spacing:0.15px;width:97px;overflow:hidden;">600.20</span>
<span class="t" style="right:524.4000000000001px;top:419px;font-size:11px;line-height:14px;color:#000;letter-spacing:-0.02px;">0,00</span>
<span class="t" style="left:1403px;top:419px;font-size:11px;line-height:14px;color:#000;letter-spacing:0.15px;width:97px;overflow:hidden;">391.20</span>
<span class="t" style="right:224.4000000000001px;top:419px;font-size:11px;line-height:14px;color:#000;letter-spacing:-0.02px;">0,00</span>
<span class="t" style="left:1703px;top:419px;font-size:11px;line-height:14px;color:#000;letter-spacing:0.15px;width:97px;overflow:hidden;">600.18</span>
<span class="t" style="right:24.40000000000009px;top:419px;font-size:11px;line-height:14px;color:#000;letter-spacing:-0.02px;">0,00</span>
<span class="t" style="left:1903px;top:419px;font-size:11px;line-height:14px;color:#000;letter-spacing:0.15px;width:12px;overflow:hidden;">39</span>
<span class="t" style="left:13px;top:441px;font-size:11px;line-height:14px;color:#000;width:30px;text-align:center;">9</span>
<span class="t" style="left:47.5px;top:441px;font-size:11px;line-height:14px;color:#000;letter-spacing:0.05px;width:97.5px;overflow:hidden;">E-Fatura</span>
<span class="t" style="left:148.3px;top:441px;font-size:11px;line-height:14px;color:#000;width:96.7px;overflow:hidden;">Istisna</span>
<span class="t" style="left:247px;top:441px;font-size:11px;line-height:14px;color:#000;letter-spacing:0.15px;width:101px;overflow:hidden;">EF12024001115...</span>
<span class="t" style="left:352px;top:441px;font-size:11px;line-height:14px;color:#000;letter-spacing:0.1px;width:96px;overflow:hidden;">6.03.2024</span>
<span class="t" style="left:451px;top:441px;font-size:11px;line-height:14px;color:#000;letter-spacing:0.098px;width:70px;overflow:hidden;">Bütüner Pa...</span>
<span class="t" style="left:525.3px;top:441px;font-size:11px;line-height:14px;color:#000;letter-spacing:-0.12px;width:74.7px;overflow:hidden;">120.10</span>
<span class="t" style="right:1124.4px;top:441px;font-size:11px;line-height:14px;color:#000;letter-spacing:-0.02px;">150,00</span>
<span class="t" style="right:1024.4px;top:441px;font-size:11px;line-height:14px;color:#000;letter-spacing:-0.02px;">0,00</span>
<span class="t" style="right:924.4px;top:441px;font-size:11px;line-height:14px;color:#000;letter-spacing:-0.02px;">150,00</span>
<span class="t" style="right:724.4000000000001px;top:441px;font-size:11px;line-height:14px;color:#000;letter-spacing:-0.02px;">0,00</span>
<span class="t" style="left:1203px;top:441px;font-size:11px;line-height:14px;color:#000;letter-spacing:0.15px;width:97px;overflow:hidden;">600.20</span>
<span class="t" style="right:524.4000000000001px;top:441px;font-size:11px;line-height:14px;color:#000;letter-spacing:-0.02px;">0,00</span>
<span class="t" style="left:1403px;top:441px;font-size:11px;line-height:14px;color:#000;letter-spacing:0.15px;width:97px;overflow:hidden;">391.20</span>
<span class="t" style="right:224.4000000000001px;top:441px;font-size:11px;line-height:14px;color:#000;letter-spacing:-0.02px;">0,00</span>
<span class="t" style="left:1703px;top:441px;font-size:11px;line-height:14px;color:#000;letter-spacing:0.15px;width:97px;overflow:hidden;">600.18</span>
<span class="t" style="right:24.40000000000009px;top:441px;font-size:11px;line-height:14px;color:#000;letter-spacing:-0.02px;">0,00</span>
<span class="t" style="left:1903px;top:441px;font-size:11px;line-height:14px;color:#000;letter-spacing:0.15px;width:12px;overflow:hidden;">39</span>
<span class="t" style="left:13px;top:463px;font-size:11px;line-height:14px;color:#000;width:30px;text-align:center;">10</span>
<span class="t" style="left:47.5px;top:463px;font-size:11px;line-height:14px;color:#000;letter-spacing:0.05px;width:97.5px;overflow:hidden;">E-Fatura</span>
<span class="t" style="left:148.3px;top:463px;font-size:11px;line-height:14px;color:#000;width:96.7px;overflow:hidden;">Istisna</span>
<span class="t" style="left:247px;top:463px;font-size:11px;line-height:14px;color:#000;letter-spacing:0.15px;width:101px;overflow:hidden;">EF12024001115...</span>
<span class="t" style="left:352px;top:463px;font-size:11px;line-height:14px;color:#000;letter-spacing:0.1px;width:96px;overflow:hidden;">6.03.2024</span>
<span class="t" style="left:451px;top:463px;font-size:11px;line-height:14px;color:#000;letter-spacing:-0.332px;width:70px;overflow:hidden;">Polat Gıda</span>
<span class="t" style="left:525.3px;top:463px;font-size:11px;line-height:14px;color:#000;letter-spacing:-0.12px;width:74.7px;overflow:hidden;">120.11</span>
<span class="t" style="right:1124.4px;top:463px;font-size:11px;line-height:14px;color:#000;letter-spacing:-0.02px;">150,00</span>
<span class="t" style="right:1024.4px;top:463px;font-size:11px;line-height:14px;color:#000;letter-spacing:-0.02px;">0,00</span>
<span class="t" style="right:924.4px;top:463px;font-size:11px;line-height:14px;color:#000;letter-spacing:-0.02px;">150,00</span>
<span class="t" style="right:724.4000000000001px;top:463px;font-size:11px;line-height:14px;color:#000;letter-spacing:-0.02px;">0,00</span>
<span class="t" style="left:1203px;top:463px;font-size:11px;line-height:14px;color:#000;letter-spacing:0.15px;width:97px;overflow:hidden;">600.20</span>
<span class="t" style="right:524.4000000000001px;top:463px;font-size:11px;line-height:14px;color:#000;letter-spacing:-0.02px;">0,00</span>
<span class="t" style="left:1403px;top:463px;font-size:11px;line-height:14px;color:#000;letter-spacing:0.15px;width:97px;overflow:hidden;">391.20</span>
<span class="t" style="right:224.4000000000001px;top:463px;font-size:11px;line-height:14px;color:#000;letter-spacing:-0.02px;">0,00</span>
<span class="t" style="left:1703px;top:463px;font-size:11px;line-height:14px;color:#000;letter-spacing:0.15px;width:97px;overflow:hidden;">600.18</span>
<span class="t" style="right:24.40000000000009px;top:463px;font-size:11px;line-height:14px;color:#000;letter-spacing:-0.02px;">0,00</span>
<span class="t" style="left:1903px;top:463px;font-size:11px;line-height:14px;color:#000;letter-spacing:0.15px;width:12px;overflow:hidden;">39</span>
<span class="t" style="left:13px;top:485px;font-size:11px;line-height:14px;color:#000;width:30px;text-align:center;">11</span>
<span class="t" style="left:47.5px;top:485px;font-size:11px;line-height:14px;color:#000;letter-spacing:0.05px;width:97.5px;overflow:hidden;">E-Fatura</span>
<span class="t" style="left:147px;top:485px;font-size:11px;line-height:14px;color:#000;width:98px;overflow:hidden;">Satış</span>
<span class="t" style="left:247px;top:485px;font-size:11px;line-height:14px;color:#000;letter-spacing:0.15px;width:101px;overflow:hidden;">EF12024001115...</span>
<span class="t" style="left:352px;top:485px;font-size:11px;line-height:14px;color:#000;letter-spacing:0.1px;width:96px;overflow:hidden;">6.03.2024</span>
<span class="t" style="left:451px;top:485px;font-size:11px;line-height:14px;color:#000;letter-spacing:-0.307px;width:70px;overflow:hidden;">Deniz Plastik</span>
<span class="t" style="left:525.3px;top:485px;font-size:11px;line-height:14px;color:#000;letter-spacing:-0.12px;width:74.7px;overflow:hidden;">120.12</span>
<span class="t" style="right:1124.4px;top:485px;font-size:11px;line-height:14px;color:#000;letter-spacing:-0.02px;">3<i>.</i>416,67</span>
<span class="t" style="right:1024.4px;top:485px;font-size:11px;line-height:14px;color:#000;letter-spacing:-0.02px;">683,33</span>
<span class="t" style="right:924.4px;top:485px;font-size:11px;line-height:14px;color:#000;letter-spacing:-0.02px;">4<i>.</i>100,00</span>
<span class="t" style="right:724.4000000000001px;top:485px;font-size:11px;line-height:14px;color:#000;letter-spacing:-0.02px;">3<i>.</i>416,67</span>
<span class="t" style="left:1203px;top:485px;font-size:11px;line-height:14px;color:#000;letter-spacing:0.15px;width:97px;overflow:hidden;">600.20</span>
<span class="t" style="right:524.4000000000001px;top:485px;font-size:11px;line-height:14px;color:#000;letter-spacing:-0.02px;">683,33</span>
<span class="t" style="left:1403px;top:485px;font-size:11px;line-height:14px;color:#000;letter-spacing:0.15px;width:97px;overflow:hidden;">391.20</span>
<span class="t" style="right:224.4000000000001px;top:485px;font-size:11px;line-height:14px;color:#000;letter-spacing:-0.02px;">0,00</span>
<span class="t" style="left:1703px;top:485px;font-size:11px;line-height:14px;color:#000;letter-spacing:0.15px;width:97px;overflow:hidden;">600.18</span>
<span class="t" style="right:24.40000000000009px;top:485px;font-size:11px;line-height:14px;color:#000;letter-spacing:-0.02px;">0,00</span>
<span class="t" style="left:1903px;top:485px;font-size:11px;line-height:14px;color:#000;letter-spacing:0.15px;width:12px;overflow:hidden;">39</span>
<span class="t" style="left:13px;top:507px;font-size:11px;line-height:14px;color:#000;width:30px;text-align:center;">12</span>
<span class="t" style="left:47.5px;top:507px;font-size:11px;line-height:14px;color:#000;letter-spacing:0.05px;width:97.5px;overflow:hidden;">E-Arşiv Fatura</span>
<span class="t" style="left:147px;top:507px;font-size:11px;line-height:14px;color:#000;width:98px;overflow:hidden;">Satış</span>
<span class="t" style="left:247px;top:507px;font-size:11px;line-height:14px;color:#000;letter-spacing:0.15px;width:101px;overflow:hidden;">EA12024001115...</span>
<span class="t" style="left:352px;top:507px;font-size:11px;line-height:14px;color:#000;letter-spacing:0.1px;width:96px;overflow:hidden;">6.03.2024</span>
<span class="t" style="left:451px;top:507px;font-size:11px;line-height:14px;color:#000;letter-spacing:-0.209px;width:70px;overflow:hidden;">Kırlangıç Ki...</span>
<span class="t" style="left:525.3px;top:507px;font-size:11px;line-height:14px;color:#000;letter-spacing:-0.12px;width:74.7px;overflow:hidden;">120.13</span>
<span class="t" style="right:1124.4px;top:507px;font-size:11px;line-height:14px;color:#000;letter-spacing:-0.02px;">313,14</span>
<span class="t" style="right:1024.4px;top:507px;font-size:11px;line-height:14px;color:#000;letter-spacing:-0.02px;">62,63</span>
<span class="t" style="right:924.4px;top:507px;font-size:11px;line-height:14px;color:#000;letter-spacing:-0.02px;">375,77</span>
<span class="t" style="right:724.4000000000001px;top:507px;font-size:11px;line-height:14px;color:#000;letter-spacing:-0.02px;">313,14</span>
<span class="t" style="left:1203px;top:507px;font-size:11px;line-height:14px;color:#000;letter-spacing:0.15px;width:97px;overflow:hidden;">600.20</span>
<span class="t" style="right:524.4000000000001px;top:507px;font-size:11px;line-height:14px;color:#000;letter-spacing:-0.02px;">62,63</span>
<span class="t" style="left:1403px;top:507px;font-size:11px;line-height:14px;color:#000;letter-spacing:0.15px;width:97px;overflow:hidden;">391.20</span>
<span class="t" style="right:224.4000000000001px;top:507px;font-size:11px;line-height:14px;color:#000;letter-spacing:-0.02px;">0,00</span>
<span class="t" style="left:1703px;top:507px;font-size:11px;line-height:14px;color:#000;letter-spacing:0.15px;width:97px;overflow:hidden;">600.18</span>
<span class="t" style="right:24.40000000000009px;top:507px;font-size:11px;line-height:14px;color:#000;letter-spacing:-0.02px;">0,00</span>
<span class="t" style="left:1903px;top:507px;font-size:11px;line-height:14px;color:#000;letter-spacing:0.15px;width:12px;overflow:hidden;">39</span>
<span class="t" style="left:13px;top:529px;font-size:11px;line-height:14px;color:#000;width:30px;text-align:center;">13</span>
<span class="t" style="left:47.5px;top:529px;font-size:11px;line-height:14px;color:#000;letter-spacing:0.05px;width:97.5px;overflow:hidden;">E-Fatura</span>
<span class="t" style="left:147px;top:529px;font-size:11px;line-height:14px;color:#000;width:98px;overflow:hidden;">Satış</span>
<span class="t" style="left:247px;top:529px;font-size:11px;line-height:14px;color:#000;letter-spacing:0.15px;width:101px;overflow:hidden;">EF12024001115...</span>
<span class="t" style="left:352px;top:529px;font-size:11px;line-height:14px;color:#000;letter-spacing:0.1px;width:96px;overflow:hidden;">6.03.2024</span>
<span class="t" style="left:451px;top:529px;font-size:11px;line-height:14px;color:#000;letter-spacing:0.201px;width:70px;overflow:hidden;">Durgun İnş...</span>
<span class="t" style="left:525.3px;top:529px;font-size:11px;line-height:14px;color:#000;letter-spacing:-0.12px;width:74.7px;overflow:hidden;">120.14</span>
<span class="t" style="right:1124.4px;top:529px;font-size:11px;line-height:14px;color:#000;letter-spacing:-0.02px;">901,67</span>
<span class="t" style="right:1024.4px;top:529px;font-size:11px;line-height:14px;color:#000;letter-spacing:-0.02px;">180,33</span>
<span class="t" style="right:924.4px;top:529px;font-size:11px;line-height:14px;color:#000;letter-spacing:-0.02px;">1<i>.</i>082,00</span>
<span class="t" style="right:724.4000000000001px;top:529px;font-size:11px;line-height:14px;color:#000;letter-spacing:-0.02px;">901,67</span>
<span class="t" style="left:1203px;top:529px;font-size:11px;line-height:14px;color:#000;letter-spacing:0.15px;width:97px;overflow:hidden;">600.20</span>
<span class="t" style="right:524.4000000000001px;top:529px;font-size:11px;line-height:14px;color:#000;letter-spacing:-0.02px;">180,33</span>
<span class="t" style="left:1403px;top:529px;font-size:11px;line-height:14px;color:#000;letter-spacing:0.15px;width:97px;overflow:hidden;">391.20</span>
<span class="t" style="right:224.4000000000001px;top:529px;font-size:11px;line-height:14px;color:#000;letter-spacing:-0.02px;">0,00</span>
<span class="t" style="left:1703px;top:529px;font-size:11px;line-height:14px;color:#000;letter-spacing:0.15px;width:97px;overflow:hidden;">600.18</span>
<span class="t" style="right:24.40000000000009px;top:529px;font-size:11px;line-height:14px;color:#000;letter-spacing:-0.02px;">0,00</span>
<span class="t" style="left:1903px;top:529px;font-size:11px;line-height:14px;color:#000;letter-spacing:0.15px;width:12px;overflow:hidden;">39</span>
<span class="t" style="left:13px;top:551px;font-size:11px;line-height:14px;color:#000;width:30px;text-align:center;">14</span>
<span class="t" style="left:47.5px;top:551px;font-size:11px;line-height:14px;color:#000;letter-spacing:0.05px;width:97.5px;overflow:hidden;">E-Fatura</span>
<span class="t" style="left:147px;top:551px;font-size:11px;line-height:14px;color:#000;width:98px;overflow:hidden;">Satış</span>
<span class="t" style="left:247px;top:551px;font-size:11px;line-height:14px;color:#000;letter-spacing:0.15px;width:101px;overflow:hidden;">EF12024001115...</span>
<span class="t" style="left:352px;top:551px;font-size:11px;line-height:14px;color:#000;letter-spacing:0.1px;width:96px;overflow:hidden;">7.03.2024</span>
<span class="t" style="left:451px;top:551px;font-size:11px;line-height:14px;color:#000;letter-spacing:0.102px;width:70px;overflow:hidden;">Kaptan Ma...</span>
<span class="t" style="left:525.3px;top:551px;font-size:11px;line-height:14px;color:#000;letter-spacing:-0.12px;width:74.7px;overflow:hidden;">102.01</span>
<span class="t" style="right:1124.4px;top:551px;font-size:11px;line-height:14px;color:#000;letter-spacing:-0.02px;">51<i>.</i>478,63</span>
<span class="t" style="right:1024.4px;top:551px;font-size:11px;line-height:14px;color:#000;letter-spacing:-0.02px;">10<i>.</i>295,73</span>
<span class="t" style="right:924.4px;top:551px;font-size:11px;line-height:14px;color:#000;letter-spacing:-0.02px;">61<i>.</i>774,36</span>
<span class="t" style="right:724.4000000000001px;top:551px;font-size:11px;line-height:14px;color:#000;letter-spacing:-0.02px;">51<i>.</i>478,63</span>
<span class="t" style="left:1203px;top:551px;font-size:11px;line-height:14px;color:#000;letter-spacing:0.15px;width:97px;overflow:hidden;">600.20</span>
<span class="t" style="right:524.4000000000001px;top:551px;font-size:11px;line-height:14px;color:#000;letter-spacing:-0.02px;">10<i>.</i>295,73</span>
<span class="t" style="left:1403px;top:551px;font-size:11px;line-height:14px;color:#000;letter-spacing:0.15px;width:97px;overflow:hidden;">391.20</span>
<span class="t" style="right:224.4000000000001px;top:551px;font-size:11px;line-height:14px;color:#000;letter-spacing:-0.02px;">0,00</span>
<span class="t" style="left:1703px;top:551px;font-size:11px;line-height:14px;color:#000;letter-spacing:0.15px;width:97px;overflow:hidden;">600.18</span>
<span class="t" style="right:24.40000000000009px;top:551px;font-size:11px;line-height:14px;color:#000;letter-spacing:-0.02px;">0,00</span>
<span class="t" style="left:1903px;top:551px;font-size:11px;line-height:14px;color:#000;letter-spacing:0.15px;width:12px;overflow:hidden;">39</span>
<span class="t" style="left:13px;top:573px;font-size:11px;line-height:14px;color:#000;width:30px;text-align:center;">15</span>
<svg style="left:12px;top:576px" width="8" height="8" viewBox="0 0 8 8"><path d="M4.2 .9v6M1.5 2.3l5.4 3.2M1.5 5.5l5.4-3.2" stroke="#3a3a3a" stroke-width="1.7"/></svg>
<div style="left:520px;top:183px;width:81px;height:388px;border:3px solid #c0005a;box-sizing:border-box;"></div>
<div style="left:5px;top:951px;width:1910px;height:17px;background:#f0f0f0;"></div>
<div style="left:5px;top:951px;width:1910px;height:1px;background:#fff;"></div>
<div style="left:5px;top:967px;width:1910px;height:1px;background:#fff;"></div>
<div style="left:22px;top:952px;width:722px;height:15px;background:#cdcdcd;"></div>
<svg style="left:9px;top:955px" width="8" height="10" viewBox="0 0 8 10"><path d="M6 1.4l-3.6 3.6 3.6 3.6" fill="none" stroke="#505050" stroke-width="2"/></svg>
<svg style="left:1903px;top:955px" width="8" height="10" viewBox="0 0 8 10"><path d="M2 1.4l3.6 3.6-3.6 3.6" fill="none" stroke="#505050" stroke-width="2"/></svg>
<div style="left:820px;top:123px;width:296px;height:74px;background:#fdfdfd;border:3px solid #e2006f;box-sizing:border-box;"></div>
<div style="left:825px;top:127px;width:21px;height:66px;background:linear-gradient(90deg,#fbfbfb,#f2f2f2);"></div>
<div style="left:820px;top:148px;width:296px;height:23px;background:#b5d7f3;border:3px solid #e2006f;box-sizing:border-box;"></div>
<div style="left:1110px;top:148px;width:3px;height:23px;background:#e2006f;"></div>
<div style="left:823px;top:151px;width:1px;height:17px;background:#e2006f;"></div>
<span class="t" style="left:857px;top:130px;font-size:12px;line-height:16px;color:#000;letter-spacing:-0.28px;">Standard Eşleştirme</span>
<span class="t" style="left:857px;top:152px;font-size:12px;line-height:16px;color:#000;letter-spacing:-0.141px;">Akıllı Eşleştirme - İlk Kelimeye göre</span>
<span class="t" style="left:857px;top:174px;font-size:12px;line-height:16px;color:#000;letter-spacing:-0.192px;">Akıllı Eşleştirme - Gözardı Kelimelere göre</span>
<div style="left:1px;top:991px;width:1499px;height:1px;background:#d9d9d9;"></div>
<div style="left:2px;top:994px;width:89px;height:17px;border:1px solid;border-color:#a0a0a0 #fff #fff #a0a0a0;box-sizing:border-box;"></div>
<span class="t" style="left:7.5px;top:996px;font-size:12px;line-height:16px;color:#000;letter-spacing:-0.576px;">Fatura Sayısı:14</span>
<div style="left:93px;top:994px;width:72px;height:19px;background:#008000;"></div>
<div style="left:94px;top:1011px;width:70px;height:1px;background:#e4f2e4;"></div>
<div style="left:163px;top:995px;width:1px;height:17px;background:#e4f2e4;"></div>
<span class="t" style="left:101.5px;top:996px;font-size:12px;line-height:16px;color:#ffffe0;letter-spacing:-0.482px;">Bakiye:0,00</span>
<div style="left:167px;top:994px;width:160px;height:17px;border:1px solid;border-color:#a0a0a0 #fff #fff #a0a0a0;box-sizing:border-box;"></div>
<span class="t" style="left:173.3px;top:996px;font-size:12px;line-height:16px;color:#000;letter-spacing:-0.308px;">Kdv Hariç Toplam:125.130,80</span>
<div style="left:329px;top:994px;width:125px;height:17px;border:1px solid;border-color:#a0a0a0 #fff #fff #a0a0a0;box-sizing:border-box;"></div>
<span class="t" style="left:337.5px;top:996px;font-size:12px;line-height:16px;color:#000;letter-spacing:-0.38px;">Toplam Kdv:24.780,82</span>
<div style="left:456px;top:994px;width:106px;height:17px;border:1px solid;border-color:#a0a0a0 #fff #fff #a0a0a0;box-sizing:border-box;"></div>
<span class="t" style="left:464px;top:996px;font-size:12px;line-height:16px;color:#000;letter-spacing:-0.299px;">Diğer Vergiler:0,00</span>
<div style="left:564px;top:994px;width:141px;height:17px;border:1px solid;border-color:#a0a0a0 #fff #fff #a0a0a0;box-sizing:border-box;"></div>
<span class="t" style="left:572.5px;top:996px;font-size:12px;line-height:16px;color:#000;letter-spacing:-0.388px;">Genel Toplam:149.911,62</span>
<div style="left:707px;top:994px;width:6px;height:17px;border:1px solid;border-color:#a0a0a0 #fff #fff #a0a0a0;box-sizing:border-box;"></div>
<div style="left:2px;top:1013px;width:1917px;height:1px;background:#fff;"></div>
<div style="left:1664px;top:985px;width:128px;height:21px;background:#e1e1e1;border:1px solid #adadad;box-sizing:border-box;"></div>
<div style="left:1667px;top:988px;width:122px;height:15px;background:#008000;"></div>
<span class="t" style="left:1671.5px;top:988px;font-size:12px;line-height:16px;color:#ffffe0;font-weight:700;letter-spacing:0.229px;">DIŞARI AKTAR - F2</span>
<div style="left:1800px;top:985px;width:115px;height:21px;background:#e1e1e1;border:1px solid #adadad;box-sizing:border-box;"></div>
<div style="left:1803px;top:988px;width:109px;height:15px;background:#d9605f;"></div>
<span class="t" style="left:1814px;top:988px;font-size:12px;line-height:16px;color:#ffffe0;font-weight:700;letter-spacing:0.05px;">VAZGEÇ - ESC</span>
<div style="left:0px;top:1016px;width:1920px;height:24px;background:#f0f0f0;"></div>
<div style="left:1px;top:1019px;width:46px;height:17px;border:1px solid;border-color:#a0a0a0 #fff #fff #a0a0a0;box-sizing:border-box;"></div>
<span class="t" style="left:6.5px;top:1021px;font-size:11px;line-height:14px;color:#000;letter-spacing:-0.781px;">DEBUG</span>
<div style="left:49px;top:1019px;width:95px;height:17px;border:1px solid;border-color:#a0a0a0 #fff #fff #a0a0a0;box-sizing:border-box;"></div>
<span class="t" style="left:54px;top:1020px;font-size:12px;line-height:16px;color:#000;letter-spacing:-0.396px;">Versiyon : 5.1.0.0</span>
</body></html>
